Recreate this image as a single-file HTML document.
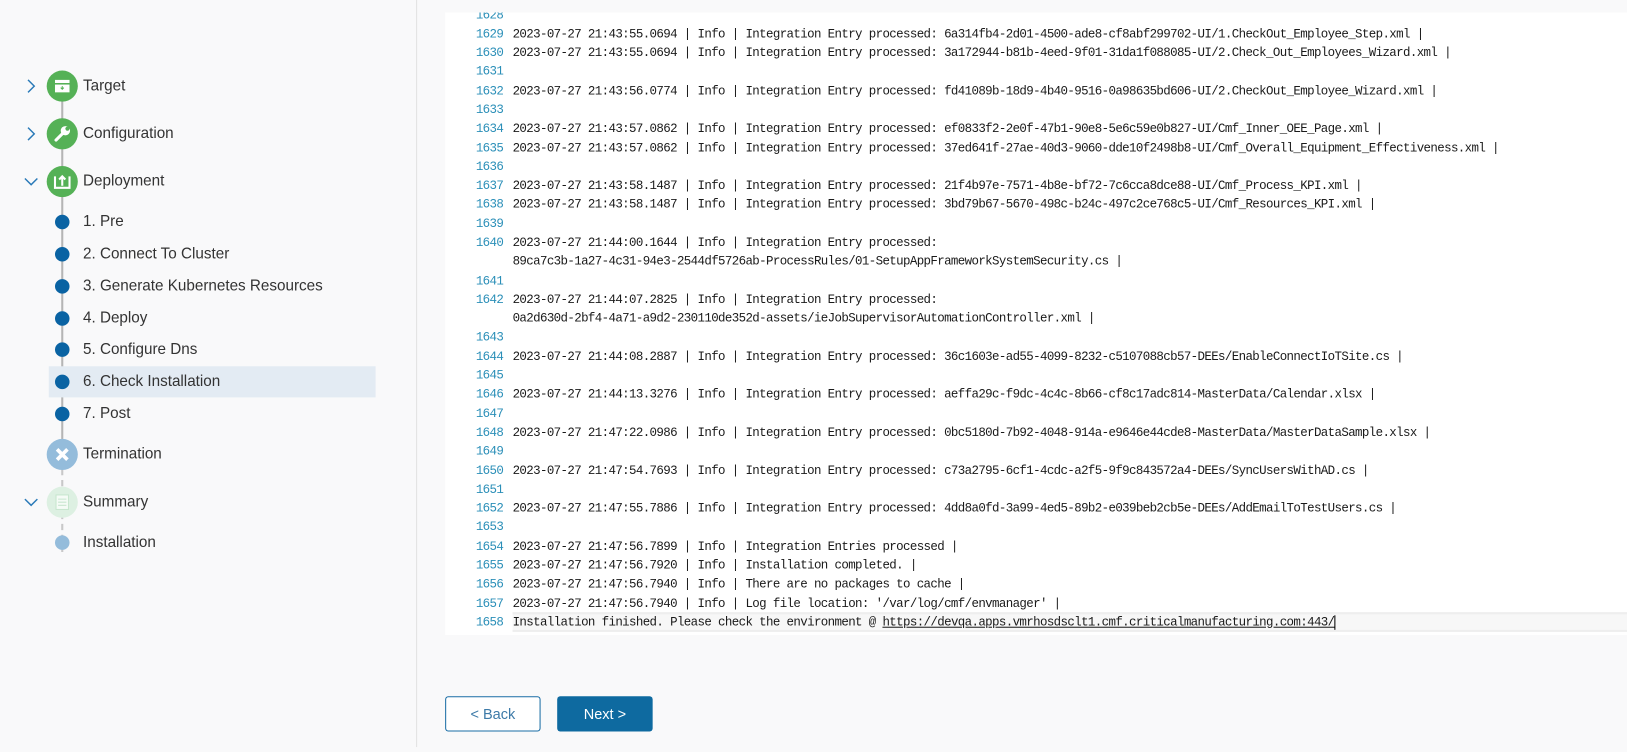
<!DOCTYPE html>
<html><head><meta charset="utf-8"><style>
*{margin:0;padding:0;box-sizing:border-box}
body{width:1627px;height:752px;background:#f9f9fa;position:relative;overflow:hidden;font-family:"Liberation Sans",sans-serif}
#w{position:absolute;left:0;top:0;width:1568px;height:725px;transform:scale(1.0376);transform-origin:0 0}
.divider{position:absolute;left:401px;top:0;width:1px;height:720px;background:#e2e2e2}
.log{position:absolute;left:429px;top:12px;width:1140px;height:600px;background:#fff;overflow:hidden}
.r{position:absolute;left:0;height:18.29px;line-height:18.29px;font-family:"Liberation Mono",monospace;font-size:12px;letter-spacing:-0.6px;color:#1a1a1a;white-space:pre}
.n{display:inline-block;width:56px;text-align:right;color:#2b8fb8;margin-right:9px}
.hl{position:absolute;left:65px;right:0;height:19px;background:#f7f7f7;border-top:2px solid #eee;border-bottom:2px solid #eee}
.s{position:absolute;left:80px;font-size:14.7px;color:#333;line-height:20px}
.vl{position:absolute;left:59px;width:2px;background:#b5b5b5}
.dl{position:absolute;left:59px;width:0;border-left:2px dashed #c8c8c8}
.big{position:absolute;left:45px;width:30px;height:30px;border-radius:50%;background:#55b156}
.dot{position:absolute;left:53px;width:14px;height:14px;border-radius:50%;background:#0a63a3}
.chev{position:absolute;left:25px}
.btn{position:absolute;top:671px;width:92px;height:34px;border-radius:3px;font-size:14px;text-align:center;line-height:32px}
</style></head><body><div id="w">
<div class="divider"></div>

<div class="vl" style="top:90px;height:340px"></div>
<div class="dl" style="top:452px;height:80px"></div>
<div style="position:absolute;left:47px;top:353px;width:315px;height:30px;background:#e3ebf3"></div>

<svg class="chev" style="top:76px" width="10" height="14" viewBox="0 0 10 14"><path d="M2 1l6 6-6 6" fill="none" stroke="#2a7ab8" stroke-width="1.4"/></svg>
<svg class="chev" style="top:122px" width="10" height="14" viewBox="0 0 10 14"><path d="M2 1l6 6-6 6" fill="none" stroke="#2a7ab8" stroke-width="1.4"/></svg>
<svg class="chev" style="top:170px;left:23px" width="14" height="10" viewBox="0 0 14 10"><path d="M1 2l6 6 6-6" fill="none" stroke="#2a7ab8" stroke-width="1.4"/></svg>
<svg class="chev" style="top:479px;left:23px" width="14" height="10" viewBox="0 0 14 10"><path d="M1 2l6 6 6-6" fill="none" stroke="#2a7ab8" stroke-width="1.4"/></svg>

<div class="big" style="top:68px"><svg width="30" height="30"><rect x="8" y="9" width="14" height="12" fill="#fff"/><rect x="8" y="12" width="14" height="1.5" fill="#55b156"/><path d="M15 15v3m-1.5-1.5l1.5 1.5 1.5-1.5" stroke="#55b156" fill="none"/></svg></div>
<div class="big" style="top:114px"><svg width="30" height="30"><path d="M9 21l7-7" stroke="#fff" stroke-width="3" stroke-linecap="round"/><circle cx="18" cy="12" r="4.5" fill="#fff"/><circle cx="20" cy="10" r="2" fill="#55b156"/></svg></div>
<div class="big" style="top:160px"><svg width="30" height="30"><path d="M8 10v11h14V10" stroke="#fff" stroke-width="2" fill="none"/><path d="M15 19v-9m-3 3l3-3 3 3" stroke="#fff" stroke-width="2" fill="none"/></svg></div>
<div class="big" style="top:423px;background:#94bcdb"><svg width="30" height="30"><path d="M10 10l10 10M20 10L10 20" stroke="#fff" stroke-width="3.5"/></svg></div>
<div class="big" style="top:469px;background:#ddf0e2"><svg width="30" height="30"><rect x="9" y="8" width="12" height="14" fill="#f5fbf6" stroke="#c8e6cf"/><path d="M11 12h8M11 15h8M11 18h8" stroke="#c8e6cf"/></svg></div>

<div class="dot" style="top:207px"></div>
<div class="dot" style="top:238px"></div>
<div class="dot" style="top:269px"></div>
<div class="dot" style="top:300px"></div>
<div class="dot" style="top:330px"></div>
<div class="dot" style="top:361px"></div>
<div class="dot" style="top:392px"></div>
<div class="dot" style="top:516px;background:#94bcdb"></div>

<div class="s" style="top:73px">Target</div>
<div class="s" style="top:119px">Configuration</div>
<div class="s" style="top:165px">Deployment</div>
<div class="s" style="top:204px">1. Pre</div>
<div class="s" style="top:235px">2. Connect To Cluster</div>
<div class="s" style="top:266px">3. Generate Kubernetes Resources</div>
<div class="s" style="top:297px">4. Deploy</div>
<div class="s" style="top:327px">5. Configure Dns</div>
<div class="s" style="top:358px">6. Check Installation</div>
<div class="s" style="top:389px">7. Post</div>
<div class="s" style="top:428px">Termination</div>
<div class="s" style="top:474px">Summary</div>
<div class="s" style="top:513px">Installation</div>

<div class="log">
<div class="hl" style="top:578px"></div>
<div class="r" style="top:-6.44px"><span class="n">1628</span></div>
<div class="r" style="top:11.85px"><span class="n">1629</span>2023-07-27 21:43:55.0694 | Info | Integration Entry processed: 6a314fb4-2d01-4500-ade8-cf8abf299702-UI/1.CheckOut_Employee_Step.xml |</div>
<div class="r" style="top:30.14px"><span class="n">1630</span>2023-07-27 21:43:55.0694 | Info | Integration Entry processed: 3a172944-b81b-4eed-9f01-31da1f088085-UI/2.Check_Out_Employees_Wizard.xml |</div>
<div class="r" style="top:48.43px"><span class="n">1631</span></div>
<div class="r" style="top:66.72px"><span class="n">1632</span>2023-07-27 21:43:56.0774 | Info | Integration Entry processed: fd41089b-18d9-4b40-9516-0a98635bd606-UI/2.CheckOut_Employee_Wizard.xml |</div>
<div class="r" style="top:85.01px"><span class="n">1633</span></div>
<div class="r" style="top:103.3px"><span class="n">1634</span>2023-07-27 21:43:57.0862 | Info | Integration Entry processed: ef0833f2-2e0f-47b1-90e8-5e6c59e0b827-UI/Cmf_Inner_OEE_Page.xml |</div>
<div class="r" style="top:121.59px"><span class="n">1635</span>2023-07-27 21:43:57.0862 | Info | Integration Entry processed: 37ed641f-27ae-40d3-9060-dde10f2498b8-UI/Cmf_Overall_Equipment_Effectiveness.xml |</div>
<div class="r" style="top:139.88px"><span class="n">1636</span></div>
<div class="r" style="top:158.17px"><span class="n">1637</span>2023-07-27 21:43:58.1487 | Info | Integration Entry processed: 21f4b97e-7571-4b8e-bf72-7c6cca8dce88-UI/Cmf_Process_KPI.xml |</div>
<div class="r" style="top:176.46px"><span class="n">1638</span>2023-07-27 21:43:58.1487 | Info | Integration Entry processed: 3bd79b67-5670-498c-b24c-497c2ce768c5-UI/Cmf_Resources_KPI.xml |</div>
<div class="r" style="top:194.75px"><span class="n">1639</span></div>
<div class="r" style="top:213.04px"><span class="n">1640</span>2023-07-27 21:44:00.1644 | Info | Integration Entry processed:</div>
<div class="r" style="top:231.33px"><span class="n"></span>89ca7c3b-1a27-4c31-94e3-2544df5726ab-ProcessRules/01-SetupAppFrameworkSystemSecurity.cs |</div>
<div class="r" style="top:249.62px"><span class="n">1641</span></div>
<div class="r" style="top:267.91px"><span class="n">1642</span>2023-07-27 21:44:07.2825 | Info | Integration Entry processed:</div>
<div class="r" style="top:286.2px"><span class="n"></span>0a2d630d-2bf4-4a71-a9d2-230110de352d-assets/ieJobSupervisorAutomationController.xml |</div>
<div class="r" style="top:304.49px"><span class="n">1643</span></div>
<div class="r" style="top:322.78px"><span class="n">1644</span>2023-07-27 21:44:08.2887 | Info | Integration Entry processed: 36c1603e-ad55-4099-8232-c5107088cb57-DEEs/EnableConnectIoTSite.cs |</div>
<div class="r" style="top:341.07px"><span class="n">1645</span></div>
<div class="r" style="top:359.36px"><span class="n">1646</span>2023-07-27 21:44:13.3276 | Info | Integration Entry processed: aeffa29c-f9dc-4c4c-8b66-cf8c17adc814-MasterData/Calendar.xlsx |</div>
<div class="r" style="top:377.65px"><span class="n">1647</span></div>
<div class="r" style="top:395.94px"><span class="n">1648</span>2023-07-27 21:47:22.0986 | Info | Integration Entry processed: 0bc5180d-7b92-4048-914a-e9646e44cde8-MasterData/MasterDataSample.xlsx |</div>
<div class="r" style="top:414.23px"><span class="n">1649</span></div>
<div class="r" style="top:432.52px"><span class="n">1650</span>2023-07-27 21:47:54.7693 | Info | Integration Entry processed: c73a2795-6cf1-4cdc-a2f5-9f9c843572a4-DEEs/SyncUsersWithAD.cs |</div>
<div class="r" style="top:450.81px"><span class="n">1651</span></div>
<div class="r" style="top:469.1px"><span class="n">1652</span>2023-07-27 21:47:55.7886 | Info | Integration Entry processed: 4dd8a0fd-3a99-4ed5-89b2-e039beb2cb5e-DEEs/AddEmailToTestUsers.cs |</div>
<div class="r" style="top:487.39px"><span class="n">1653</span></div>
<div class="r" style="top:505.68px"><span class="n">1654</span>2023-07-27 21:47:56.7899 | Info | Integration Entries processed |</div>
<div class="r" style="top:523.97px"><span class="n">1655</span>2023-07-27 21:47:56.7920 | Info | Installation completed. |</div>
<div class="r" style="top:542.26px"><span class="n">1656</span>2023-07-27 21:47:56.7940 | Info | There are no packages to cache |</div>
<div class="r" style="top:560.55px"><span class="n">1657</span>2023-07-27 21:47:56.7940 | Info | Log file location: '/var/log/cmf/envmanager' |</div>
<div class="r" style="top:578.84px"><span class="n">1658</span>Installation finished. Please check the environment @ <u>https://devqa.apps.vmrhosdsclt1.cmf.criticalmanufacturing.com:443/</u><span style="border-left:1.5px solid #000"></span></div>
</div>

<div class="btn" style="left:429px;border:1px solid #1b6ea6;color:#3d7aa8;background:#fff">&lt; Back</div>
<div class="btn" style="left:537px;background:#0e6aa0;color:#fff;line-height:34px">Next &gt;</div>
</div></body></html>
